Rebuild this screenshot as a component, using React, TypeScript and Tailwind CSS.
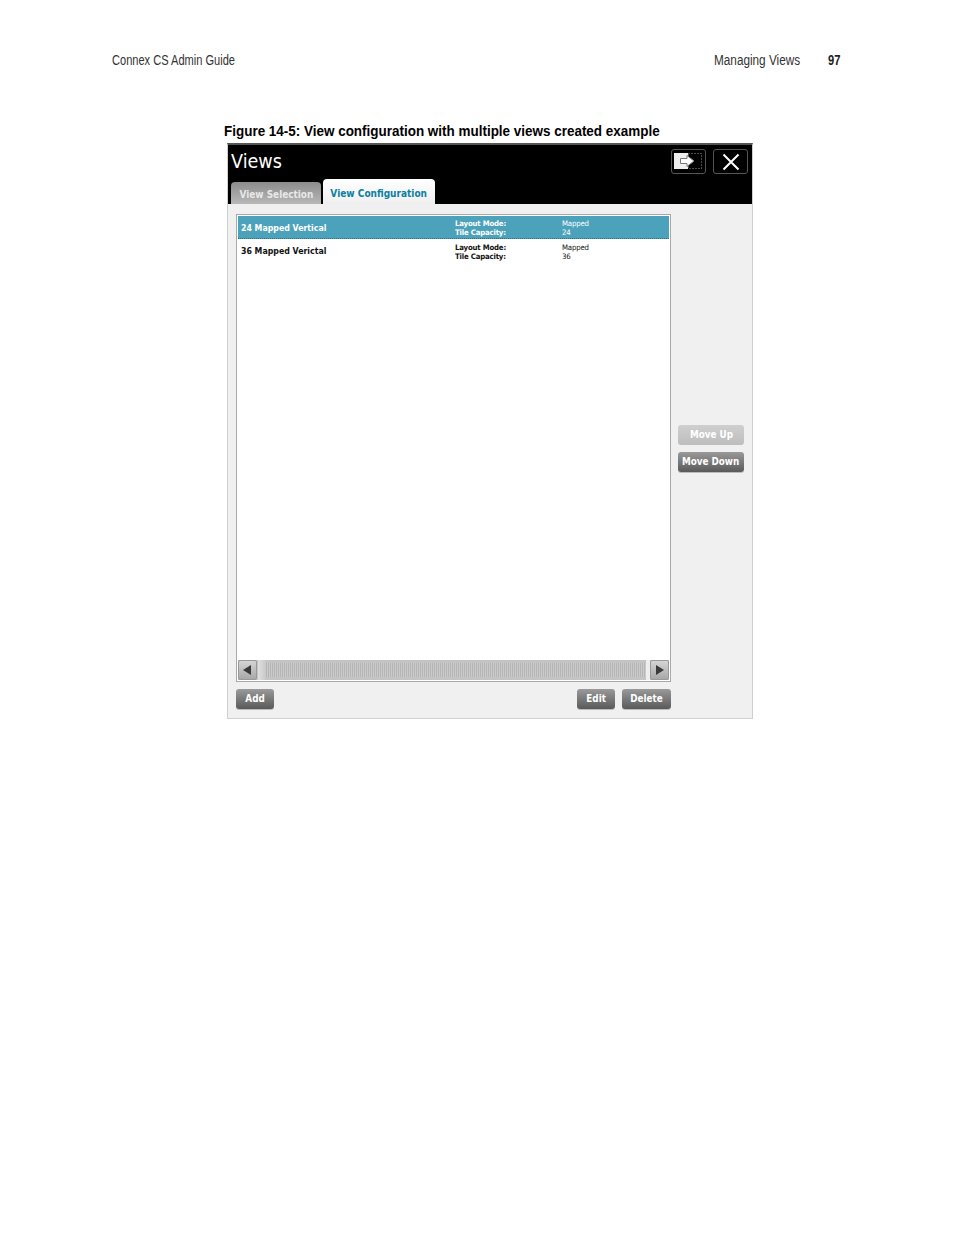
const sans = "font-['Liberation_Sans',Arial,sans-serif]";
const ui = "font-['DejaVu_Sans',Verdana,sans-serif]";

function GrayButton({ label, disabled, className }: { label: string; disabled?: boolean; className: string }) {
  return (
    <div
      className={[
        "flex h-[20px] items-center justify-center rounded-[3px] pb-px text-[10px] font-bold text-white",
        ui,
        disabled
          ? "bg-gradient-to-b from-[#cfcfcf] to-[#bdbdbd] text-[#f2f2f2]"
          : "bg-gradient-to-b from-[#9a9a9a] to-[#5a5a5a] shadow-[0_1px_0_#bbbbbb]",
        className,
      ].join(" ")}
    >
      <span className="scale-x-[0.88] whitespace-nowrap">{label}</span>
    </div>
  );
}

function ViewRow({ name, capacity, selected }: { name: string; capacity: string; selected?: boolean }) {
  return (
    <div
      className={[
        "flex h-[23px] items-center",
        selected ? "border-b border-dotted border-b-[#2d6f85] bg-[#4da2bb] pt-px text-white" : "bg-white pt-[2px] text-[#111111]",
      ].join(" ")}
    >
      <div className={`ml-[3px] w-[214px] text-[9px] font-bold ${ui} ${selected ? "pt-[2px]" : "pt-px"}`}>
        <div className="origin-left scale-x-[0.87] whitespace-nowrap">{name}</div>
      </div>
      <div className={`w-[107px] origin-left scale-x-[0.93] text-[7.5px] leading-[9px] font-bold tracking-[-0.2px] ${ui}`}>
        <div>Layout Mode:</div>
        <div>Tile Capacity:</div>
      </div>
      <div className={`origin-left scale-x-[0.93] text-[7.5px] leading-[9px] tracking-[-0.2px] ${ui}`}>
        <div>Mapped</div>
        <div>{capacity}</div>
      </div>
    </div>
  );
}

export default function App() {
  return (
    <div className="h-[1235px] w-[954px] overflow-hidden bg-white">
      {/* page header */}
      <div className={`flex h-[68px] items-end pl-[112px] text-[14px] leading-[15px] text-[#333333] ${sans}`}>
        <span className="w-[123px] origin-left scale-x-[0.79] whitespace-nowrap">Connex CS Admin Guide</span>
        <span className="ml-[479px] w-[86px] origin-left scale-x-[0.84] whitespace-nowrap">Managing Views</span>
        <span className="ml-[28px] origin-left scale-x-[0.8] font-bold text-[#222222]">97</span>
      </div>

      <div className={`mt-[54px] h-[17px] pl-[224px] text-[15px] leading-[17px] font-bold text-black ${sans}`}>
        <div className="origin-left scale-x-[0.897] whitespace-nowrap">
          Figure 14-5: View configuration with multiple views created example
        </div>
      </div>

      {/* screen capture */}
      <div className="mt-[4px] ml-[227px] w-[526px] border border-t-2 border-[#d0d0d0] border-t-[#555555] bg-[#f0f0f0]">
        <div className="relative h-[59px] bg-black">
          <div className={`absolute top-[4px] left-[3px] origin-left scale-x-[0.88] text-[20px] leading-[24px] text-white ${ui}`}>Views</div>

          <div className="absolute top-[4px] right-[46px] flex h-[25px] w-[35px] items-center justify-center rounded-[3px] border border-[#555555]">
            <svg width="29" height="19" viewBox="0 0 29 19">
              <rect x="0" y="1" width="14" height="16" fill="#efefef" />
              <rect x="14.5" y="1.5" width="13" height="15" fill="none" stroke="#999999" strokeWidth="1" strokeDasharray="1 2" />
              <path d="M6.5 6.5H13V3.5L20 9L13 14.5V11.5H6.5Z" fill="#ffffff" stroke="#777777" strokeWidth="1" />
            </svg>
          </div>

          <div className="absolute top-[4px] right-[4px] flex h-[25px] w-[35px] items-center justify-center rounded-[3px] border border-[#555555]">
            <svg width="18" height="18" viewBox="0 0 18 18">
              <path d="M1.5 1.5L16.5 16.5M16.5 1.5L1.5 16.5" stroke="#ffffff" strokeWidth="2" />
            </svg>
          </div>

          <div className="absolute bottom-0 left-[3px] flex items-end gap-[2px]">
            <div className={`flex h-[22px] w-[90px] items-center justify-center rounded-t-[4px] bg-gradient-to-b from-[#8c8c8c] to-[#b8b8b8] pt-[2px] text-[10px] font-bold text-[#e8e8e8] ${ui}`}>
              <span className="scale-x-[0.89] whitespace-nowrap">View Selection</span>
            </div>
            <div className={`flex h-[25px] w-[112px] items-center justify-center rounded-t-[4px] bg-gradient-to-b from-white to-[#efefef] pt-[3px] text-[10px] font-bold text-[#0c7f9f] ${ui}`}>
              <span className="scale-x-[0.9] whitespace-nowrap">View Configuration</span>
            </div>
          </div>
        </div>

        <div className="flex h-[514px] pt-[10px] pl-[8px]">
          <div className="w-[435px]">
            <div className="flex h-[468px] flex-col border border-[#a9a9a9] bg-white p-px">
              <div className="flex-1">
                <ViewRow name="24 Mapped Vertical" capacity="24" selected />
                <ViewRow name="36 Mapped Verictal" capacity="36" />
              </div>
              {/* scrollbar */}
              <div className="flex h-[20px] items-center bg-[#c4c4c4]">
                <div className="flex h-[20px] w-[19px] items-center justify-center rounded-[2px] border border-[#999999] bg-gradient-to-b from-[#d5d5d5] to-[#a8a8a8]">
                  <svg width="9" height="10" viewBox="0 0 9 10"><path d="M8 0V10L0 5Z" fill="#3a3a3a" /></svg>
                </div>
                <div className="ml-px h-[20px] w-[8px] bg-gradient-to-r from-[#e0e0e0] to-[#c8c8c8]" />
                <div className="h-[14px] flex-1 bg-[repeating-linear-gradient(90deg,#b5b5b5_0,#b5b5b5_1px,#cbcbcb_1px,#cbcbcb_2px)]" />
                <div className="h-[20px] w-[4px] bg-[#eeeeee]" />
                <div className="flex h-[20px] w-[19px] items-center justify-center rounded-[2px] border border-[#999999] bg-gradient-to-b from-[#d5d5d5] to-[#a8a8a8]">
                  <svg width="9" height="10" viewBox="0 0 9 10"><path d="M1 0V10L9 5Z" fill="#3a3a3a" /></svg>
                </div>
              </div>
            </div>

            <div className="mt-[7px] flex">
              <GrayButton label="Add" className="w-[38px]" />
              <GrayButton label="Edit" className="ml-auto w-[38px]" />
              <GrayButton label="Delete" className="ml-[7px] w-[49px]" />
            </div>
          </div>

          <div className="ml-[7px] flex w-[66px] flex-col gap-[7px] pt-[211px]">
            <GrayButton label="Move Up" disabled className="w-full" />
            <GrayButton label="Move Down" className="w-full" />
          </div>
        </div>
      </div>
    </div>
  );
}
